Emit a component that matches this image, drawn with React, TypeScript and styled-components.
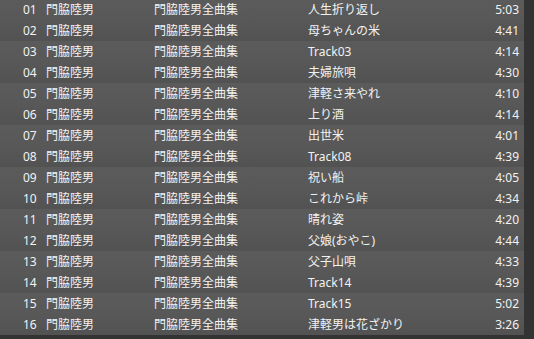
import styled, { createGlobalStyle } from "styled-components";

const GlobalStyle = createGlobalStyle`
  html, body {
    margin: 0;
    padding: 0;
    background: #333333;
    overflow: hidden;
  }
`

const Page = styled.div`
  width: 534px;
  height: 339px;
  background: #333333;
  overflow: hidden;
`

const TrackList = styled.ol`
  list-style: none;
  margin: -1px 0 0;
  padding: 0;
  width: 524px;
  font-family: "Noto Sans", "Noto Sans CJK JP", sans-serif;
  font-size: 12px;
  color: #f2f2f2;
`

const Row = styled.li<{ $odd: boolean }>`
  display: grid;
  grid-template-columns: 23px 108px 154px 1fr auto;
  align-items: center;
  height: 21px;
  padding: 0 5px 0 23px;
  background: ${(p) =>
    p.$odd
      ? "linear-gradient(#5b5b5b, #585858)"
      : "linear-gradient(#585858, #525252)"};
  > span {
    white-space: nowrap;
    line-height: 21px;
  }
`

const Time = styled.span`
  text-align: right;
`

const tracks: [string, string][] = [
  ["人生折り返し", "5:03"],
  ["母ちゃんの米", "4:41"],
  ["Track03", "4:14"],
  ["夫婦旅唄", "4:30"],
  ["津軽さ来やれ", "4:10"],
  ["上り酒", "4:14"],
  ["出世米", "4:01"],
  ["Track08", "4:39"],
  ["祝い船", "4:05"],
  ["これから峠", "4:34"],
  ["晴れ姿", "4:20"],
  ["父娘(おやこ)", "4:44"],
  ["父子山唄", "4:33"],
  ["Track14", "4:39"],
  ["Track15", "5:02"],
  ["津軽男は花ざかり", "3:26"],
]

function App() {
  return (
    <Page>
      <GlobalStyle />
      <TrackList>
        {tracks.map(([title, time], i) => (
          <Row key={i} $odd={i % 2 === 0}>
            <span>{String(i + 1).padStart(2, "0")}</span>
            <span>門脇陸男</span>
            <span>門脇陸男全曲集</span>
            <span>{title}</span>
            <Time>{time}</Time>
          </Row>
        ))}
      </TrackList>
    </Page>
  )
}

export default App;
